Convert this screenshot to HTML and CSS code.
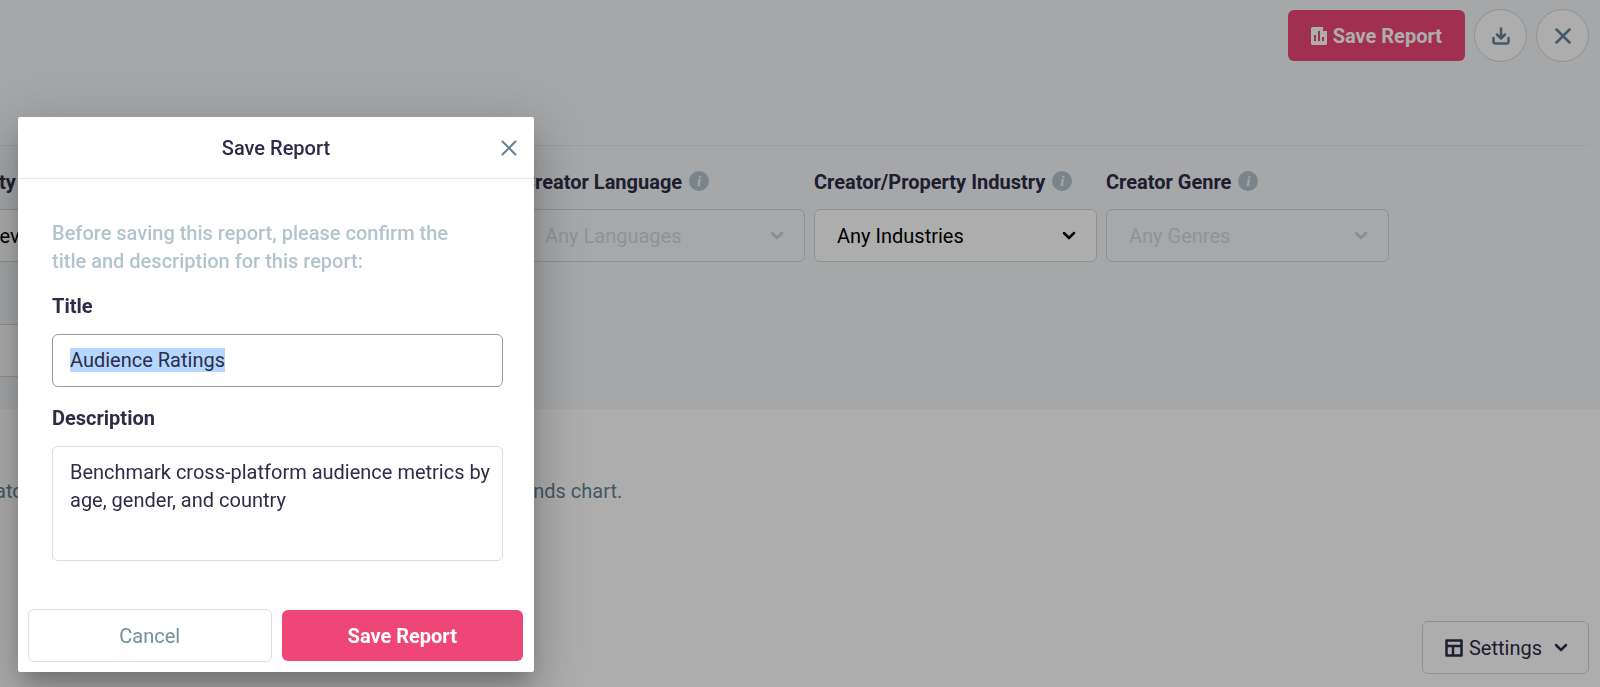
FILE: index.html
```html
<!DOCTYPE html>
<html lang="en">
<head>
    <meta charset="UTF-8">
    <meta name="viewport" content="width=device-width, initial-scale=1.0">
    <title>Audience Ratings</title>
    <link rel="stylesheet" href="styles.css">
</head>
<body>
    <div class="page">
        <div class="panel">
            <!-- Top actions -->
            <header class="toolbar">
                <button type="button" class="btn btn-primary">
                    <svg width="16" height="18" viewBox="0 0 16 18" aria-hidden="true">
                        <path fill="currentColor" fill-rule="evenodd" d="M1.500 0H12v4h4v12.500a1.500 1.500 0 0 1-1.500 1.500h-13A1.500 1.500 0 0 1 0 16.500v-15A1.500 1.500 0 0 1 1.500 0zM3 8v6h2V8zM7 4v10h2V4zM11 10v4h2v-4z"/>
                    </svg>
                    Save Report
                </button>
                <button type="button" class="btn-round" aria-label="Download">
                    <svg width="18" height="18" viewBox="0 0 18 18" fill="none" stroke="currentColor" stroke-width="2.5" stroke-linecap="round" stroke-linejoin="round" aria-hidden="true">
                        <path d="M9 1.500v10M5 7.500l4 4 4-4M1.500 11v3.500a2 2 0 0 0 2 2h11a2 2 0 0 0 2-2V11"/>
                    </svg>
                </button>
                <button type="button" class="btn-round" aria-label="Close report">
                    <svg width="16" height="16" viewBox="0 0 16 16" fill="none" stroke="currentColor" stroke-width="2.5" stroke-linecap="round" aria-hidden="true">
                        <path d="M1.500 1.500l13 13M14.500 1.500l-13 13"/>
                    </svg>
                </button>
            </header>

            <!-- Filters -->
            <div class="filters">
                <div class="field">
                    <div class="field-label"><label for="property">Property</label><span class="info">i</span></div>
                    <div class="select">
                        <select id="property"><option>All Levels</option></select>
                        <svg class="chevron" viewBox="0 0 14 9" aria-hidden="true"><path d="M2 2l5 5 5-5"/></svg>
                    </div>
                </div>
                <div class="field">
                    <div class="field-label"><label for="country">Creator Country</label><span class="info">i</span></div>
                    <div class="select">
                        <select id="country"><option>Any Countries</option></select>
                        <svg class="chevron" viewBox="0 0 14 9" aria-hidden="true"><path d="M2 2l5 5 5-5"/></svg>
                    </div>
                </div>
                <div class="field">
                    <div class="field-label"><label for="language">Creator Language</label><span class="info">i</span></div>
                    <div class="select disabled">
                        <select id="language" disabled><option>Any Languages</option></select>
                        <svg class="chevron" viewBox="0 0 14 9" aria-hidden="true"><path d="M2 2l5 5 5-5"/></svg>
                    </div>
                </div>
                <div class="field">
                    <div class="field-label"><label for="industry">Creator/Property Industry</label><span class="info">i</span></div>
                    <div class="select">
                        <select id="industry"><option>Any Industries</option></select>
                        <svg class="chevron" viewBox="0 0 14 9" aria-hidden="true"><path d="M2 2l5 5 5-5"/></svg>
                    </div>
                </div>
                <div class="field">
                    <div class="field-label"><label for="genre">Creator Genre</label><span class="info">i</span></div>
                    <div class="select disabled">
                        <select id="genre" disabled><option>Any Genres</option></select>
                        <svg class="chevron" viewBox="0 0 14 9" aria-hidden="true"><path d="M2 2l5 5 5-5"/></svg>
                    </div>
                </div>
                <div class="field">
                    <div class="field-label"><label for="age">Age</label></div>
                    <div class="select">
                        <select id="age"><option></option></select>
                    </div>
                </div>
            </div>
        </div>

        <main class="content">
            <p>By Creator or property may be selected to see it on the audience trends chart.</p>
            <button type="button" class="btn btn-outline btn-settings">
                <svg width="18" height="18" viewBox="0 0 18 18" fill="none" stroke="currentColor" stroke-width="2.5" stroke-linejoin="round" aria-hidden="true">
                    <path d="M1.500 1.500h15v15h-15zM1.500 7h15M8 7v9.500"/>
                </svg>
                Settings
                <svg class="chevron" viewBox="0 0 14 9" aria-hidden="true"><path d="M2 2l5 5 5-5"/></svg>
            </button>
        </main>
    </div>

    <div class="overlay"></div>

    <!-- Save dialog -->
    <form class="dialog" role="dialog" aria-labelledby="dialog-title">
        <div class="dialog-header">
            <h2 id="dialog-title">Save Report</h2>
            <button type="button" class="dialog-close" aria-label="Close">
                <svg width="16" height="16" viewBox="0 0 16 16" fill="none" stroke="currentColor" stroke-width="2" stroke-linecap="round" aria-hidden="true">
                    <path d="M1.500 1.500l13 13M14.500 1.500l-13 13"/>
                </svg>
            </button>
        </div>
        <div class="dialog-body">
            <p>Before saving this report, please confirm the title and description for this report:</p>
            <label for="title">Title</label>
            <input type="text" id="title" name="title" value="Audience Ratings">
            <label for="description">Description</label>
            <textarea id="description" name="description">Benchmark cross-platform audience metrics by age, gender, and country</textarea>
        </div>
        <div class="dialog-footer">
            <button type="button" class="btn btn-outline btn-cancel">Cancel</button>
            <button type="submit" class="btn btn-primary">Save Report</button>
        </div>
    </form>

    <script>
        const title = document.getElementById("title");
        title.focus();
        title.select();
    </script>
</body>
</html>
```
FILE: styles.css
```css
* {
    box-sizing: border-box;
}

body {
    margin: 0;
    font-family: Roboto, sans-serif;
    font-size: 20px;
    line-height: 28px;
    color: #2f2c48;
    background: #fff;
    overflow: hidden;
}

button,
input,
select,
textarea {
    font: inherit;
    color: inherit;
}

/* the report is scrolled a little to the right */
.page {
    margin-left: -62px;
}

.panel {
    background: #f3f6f9;
    padding: 9px 11px 32px 0;
}

.toolbar {
    display: flex;
    justify-content: flex-end;
    align-items: center;
    gap: 9px;
    padding-bottom: 83px;
    border-bottom: 1px solid #e4e9ec;
}

.btn {
    display: flex;
    justify-content: center;
    align-items: center;
    gap: 6px;
    border-radius: 6px;
    cursor: pointer;
}

.btn-primary {
    height: 51px;
    padding: 0 23px;
    border: none;
    background: #ed4677;
    color: #fff;
    font-weight: bold;
}

.btn-outline {
    height: 53px;
    padding: 0 20px 0 22px;
    border: 1px solid #d5dfe5;
    background: #fff;
}

.btn-round {
    display: flex;
    justify-content: center;
    align-items: center;
    width: 53px;
    height: 53px;
    padding: 0;
    border: 1px solid #cdd8de;
    border-radius: 50%;
    background: #fff;
    color: #648496;
    cursor: pointer;
}

.filters {
    display: flex;
    flex-wrap: wrap;
    gap: 21px 9px;
    padding-top: 22px;
    padding-right: 192px;
}

.field {
    width: 283px;
}

.field-label {
    display: flex;
    align-items: center;
    gap: 7px;
    margin-bottom: 13px;
    font-weight: bold;
}

.info {
    width: 20px;
    height: 20px;
    margin-bottom: 2px;
    border-radius: 50%;
    background: #b3c4cd;
    color: #f3f6f9;
    font-family: "Liberation Serif", serif;
    font-size: 15px;
    font-style: italic;
    line-height: 20px;
    text-align: center;
}

.select {
    position: relative;
}

.select select {
    display: block;
    width: 100%;
    height: 53px;
    padding: 0 22px;
    border: 1px solid #cdd8de;
    border-radius: 6px;
    background: #fff;
    color: #000;
    opacity: 1;
    appearance: none;
}

.chevron {
    width: 14px;
    height: 9px;
    fill: none;
    stroke: currentColor;
    stroke-width: 2.5;
    stroke-linecap: round;
    stroke-linejoin: round;
}

.select .chevron {
    position: absolute;
    top: 22px;
    right: 21px;
    color: #000;
}

.select.disabled select {
    background: #f6f8fa;
    color: #d0dae0;
}

.select.disabled .chevron {
    color: #c6d2d9;
}

.content {
    padding: 68px 11px 12px 0;
}

.content p {
    margin: 0 0 116px;
    color: #648496;
}

.btn-settings {
    margin-left: auto;
    border-color: #cdd8de;
}

.btn-settings .chevron {
    margin-left: 6px;
}

.overlay {
    position: fixed;
    inset: 0;
    background: rgba(0, 0, 0, 0.32);
}

.dialog {
    position: fixed;
    top: 117px;
    left: 18px;
    width: 516px;
    background: #fff;
    border-radius: 2px;
    box-shadow: 0 12px 18px -6px rgba(0, 0, 0, 0.2),
        0 24px 40px 3px rgba(0, 0, 0, 0.14),
        0 10px 60px 12px rgba(0, 0, 0, 0.12);
}

.dialog-header {
    position: relative;
    padding: 17px 17px 16px;
    border-bottom: 1px solid #e6e9eb;
    text-align: center;
}

.dialog-header h2 {
    margin: 0;
    font-size: 20px;
    font-weight: 500;
}

.dialog-close {
    position: absolute;
    top: 23px;
    right: 17px;
    display: flex;
    padding: 0;
    border: none;
    background: none;
    color: #648496;
    cursor: pointer;
}

.dialog-body {
    padding: 40px 31px 48px 34px;
}

.dialog-body p {
    margin: 0 0 17px;
    padding-right: 32px;
    color: #b3c4cd;
    font-weight: 500;
}

.dialog-body label {
    display: block;
    margin-bottom: 14px;
    font-weight: bold;
}

.dialog-body input,
.dialog-body textarea {
    display: block;
    width: 100%;
    padding: 11px 8px 13px 17px;
    border: 1px solid #d5dfe5;
    border-radius: 6px;
    outline: none;
    background: #fff;
}

.dialog-body input {
    height: 53px;
    margin-bottom: 17px;
}

.dialog-body input:focus {
    border-color: #9a99a6;
}

.dialog-body input::selection {
    background: #b3d7ff;
    color: #2f2c48;
}

.dialog-body textarea {
    height: 115px;
    resize: none;
}

.dialog-footer {
    display: flex;
    align-items: center;
    gap: 10px;
    padding: 0 11px 10px 10px;
}

.dialog-footer .btn {
    flex: 1;
    padding: 0;
}

.btn-cancel {
    color: #6f90a1;
}
```
